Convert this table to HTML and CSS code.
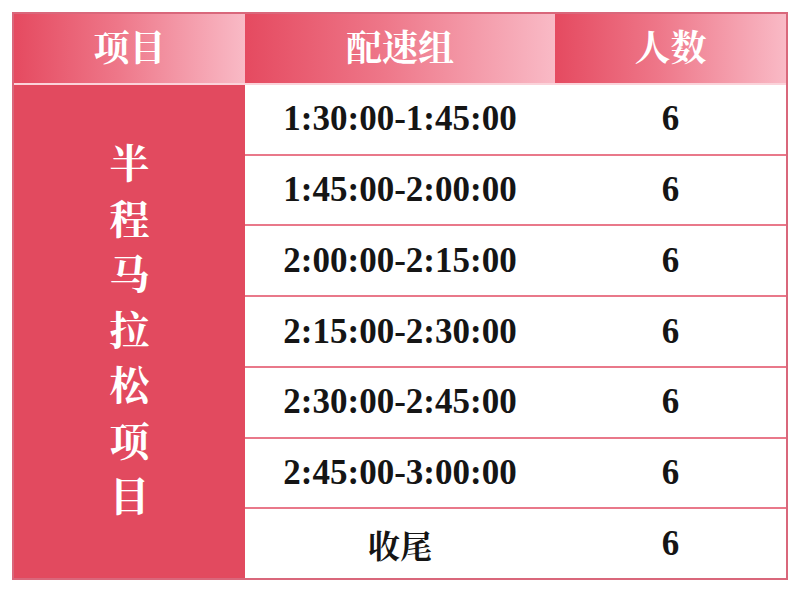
FILE: index.html
```html
<!DOCTYPE html>
<html lang="zh">
<head>
<meta charset="utf-8">
<title>半程马拉松配速组</title>
<link rel="stylesheet" href="styles.css">
</head>
<body>
<div class="pace">
  <div class="head">
    <div class="hcell c1">项目</div>
    <div class="hcell c2">配速组</div>
    <div class="hcell c3">人数</div>
  </div>
  <div class="body">
    <div class="event c1">
      <div class="vert"><span>半</span><span>程</span><span>马</span><span>拉</span><span>松</span><span>项</span><span>目</span></div>
    </div>
    <div class="rows">
      <div class="row"><div class="cell c2 num">1:30:00-1:45:00</div><div class="cell c3 num">6</div></div>
      <div class="row"><div class="cell c2 num">1:45:00-2:00:00</div><div class="cell c3 num">6</div></div>
      <div class="row"><div class="cell c2 num">2:00:00-2:15:00</div><div class="cell c3 num">6</div></div>
      <div class="row"><div class="cell c2 num">2:15:00-2:30:00</div><div class="cell c3 num">6</div></div>
      <div class="row"><div class="cell c2 num">2:30:00-2:45:00</div><div class="cell c3 num">6</div></div>
      <div class="row"><div class="cell c2 num">2:45:00-3:00:00</div><div class="cell c3 num">6</div></div>
      <div class="row"><div class="cell c2 cjk">收尾</div><div class="cell c3 num">6</div></div>
    </div>
  </div>
</div>
</body>
</html>
```
FILE: styles.css
```css
html, body {
  margin: 0;
  padding: 0;
  background: #ffffff;
}
body {
  padding: 12px;
  font-family: "Noto Serif CJK SC", "Noto Sans CJK SC", serif;
}
.pace {
  box-sizing: border-box;
  width: 776px;
  height: 568px;
  border: 2px solid #d9677b;
  display: flex;
  flex-direction: column;
}
.c1 { width: 231px; flex: none; }
.c2 { width: 310px; flex: none; }
.c3 { flex: 1; }
.head {
  display: flex;
  height: 69px;
  border-bottom: 2px solid #fbd3da;
  flex: none;
}
.hcell {
  display: flex;
  align-items: center;
  justify-content: center;
  color: #ffffff;
  font-size: 36px;
  font-weight: 700;
  padding-bottom: 6px;
  box-sizing: border-box;
  background: linear-gradient(90deg, #e54a60 0%, #ee7789 45%, #f9bac6 100%);
}
.body {
  flex: 1;
  display: flex;
}
.event {
  background: #e24a5f;
  display: flex;
  align-items: center;
  justify-content: center;
  color: #ffffff;
}
.vert {
  display: flex;
  flex-direction: column;
  align-items: center;
  font-size: 40px;
  font-weight: 700;
  line-height: 55.5px;
  margin-top: -8px;
}
.rows {
  flex: 1;
  display: flex;
  flex-direction: column;
}
.row {
  flex: 1;
  display: flex;
  border-bottom: 2px solid #e9788a;
}
.row:last-child {
  border-bottom: none;
}
.cell {
  display: flex;
  align-items: center;
  justify-content: center;
  color: #151515;
}
.num {
  font-family: "Liberation Serif", "Noto Serif CJK SC", serif;
  font-size: 35px;
  font-weight: 700;
}
.cjk {
  font-size: 32px;
  font-weight: 700;
}
```
